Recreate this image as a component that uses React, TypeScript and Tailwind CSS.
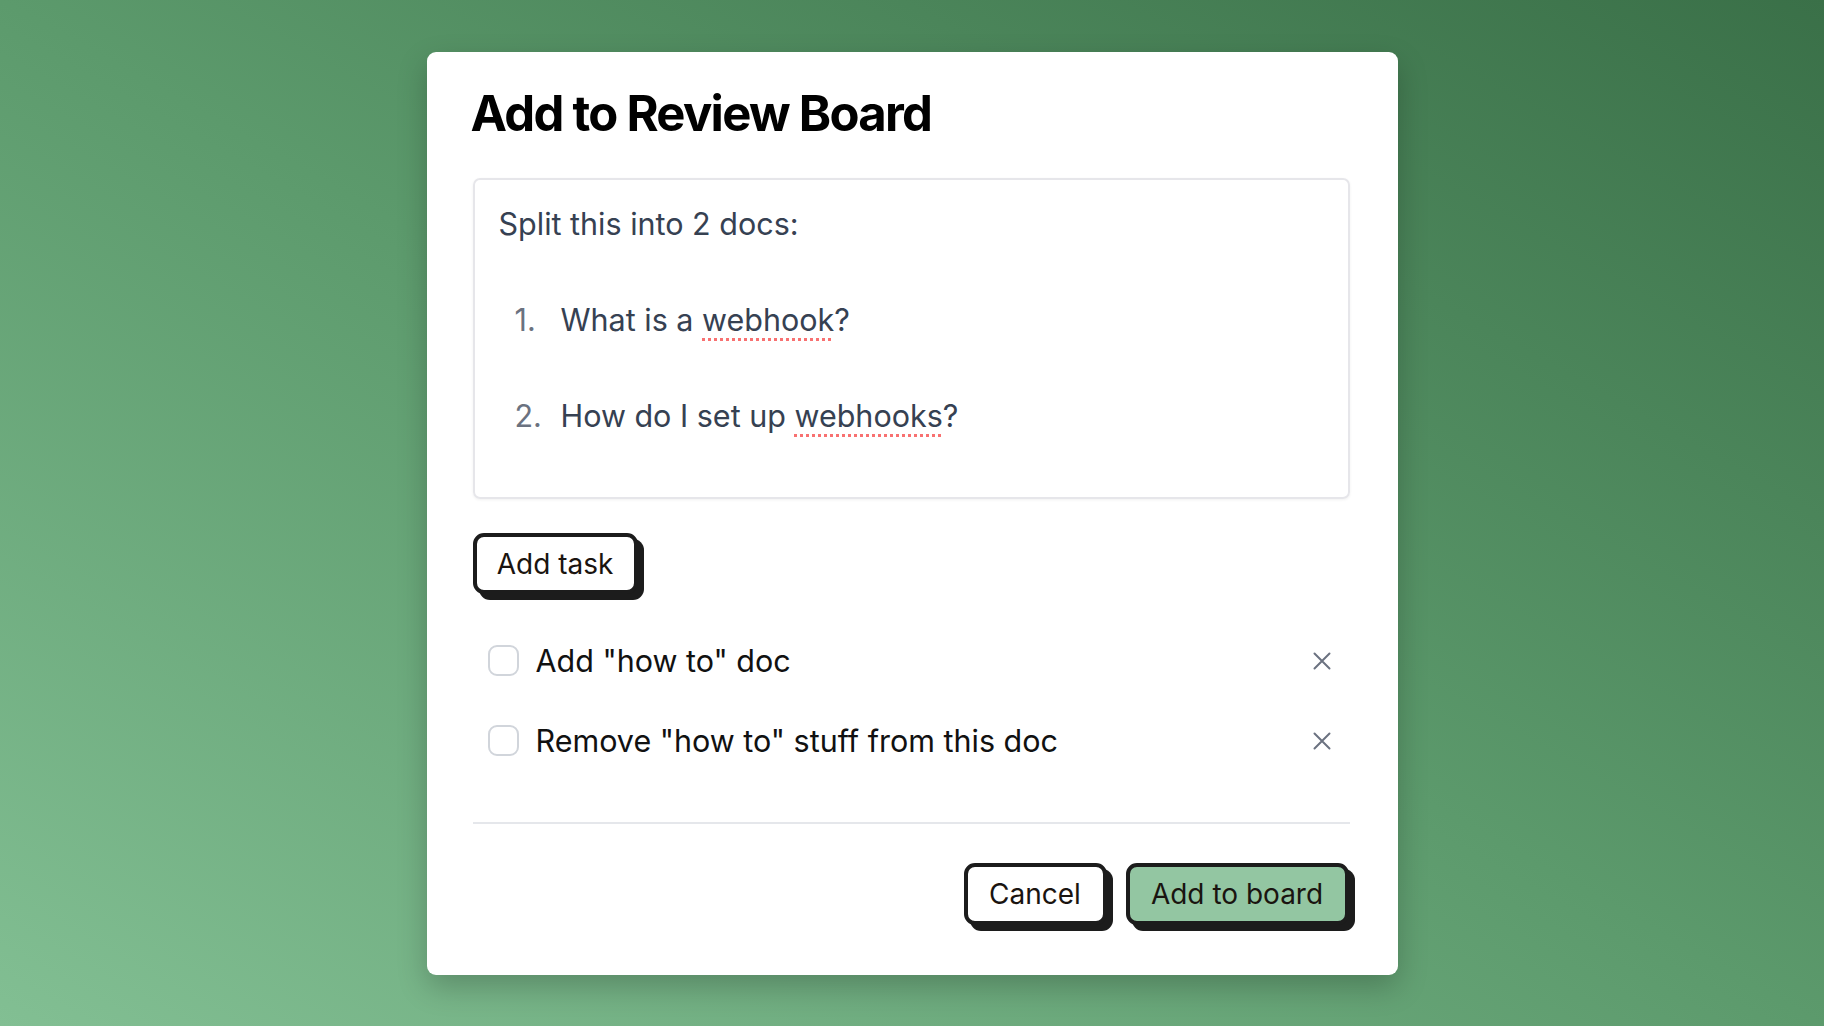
import React from 'react';

const tasks = ['Add "how to" doc', 'Remove "how to" stuff from this doc'];

const XIcon = () => (
  <svg width="18" height="18" viewBox="0 0 18 18" fill="none" stroke="#6b7280" strokeWidth="2" strokeLinecap="round">
    <path d="M1.5 1.5L16.5 16.5M16.5 1.5L1.5 16.5" />
  </svg>
);

const Misspelled: React.FC<{ children: React.ReactNode }> = ({ children }) => (
  <span className="underline decoration-dotted decoration-[#f87171] decoration-[3px] underline-offset-[7px]">
    {children}
  </span>
);

export default function App() {
  const [checked, setChecked] = React.useState<boolean[]>([false, false]);

  return (
    <div
      className="w-full h-[1026px] flex items-center justify-center bg-linear-to-tr from-[#82bf93] via-[#5c9a6c] to-[#3a7048]"
      style={{ fontFamily: 'Inter, "Noto Sans", sans-serif' }}
    >
      <div className="w-[971px] h-[923px] bg-white rounded-[9px] shadow-[0_12px_30px_rgba(0,0,0,0.22)] pl-[46px] pr-[48px] pt-[37px] pb-[50px] flex flex-col">
        <h1 className="text-[49px] leading-[50px] font-bold text-black tracking-[-0.035em] -ml-[2px]">Add to Review Board</h1>

        <div className="mt-[39px] border-2 border-[#e6e6ea] rounded-[7px] shadow-[0_1px_3px_rgba(0,0,0,0.06)] pt-[24px] pb-[61px] pl-[24px] text-[30.5px] leading-[40px] text-[#364152]">
          <p>Split this into 2 docs:</p>
          <ol className="mt-[56px] flex flex-col gap-[56px]">
            <li className="flex pl-[16px]">
              <span className="w-[46px] text-[#6b7280]">1.</span>
              <span>
                What is a <Misspelled>webhook</Misspelled>?
              </span>
            </li>
            <li className="flex pl-[16px]">
              <span className="w-[46px] text-[#6b7280]">2.</span>
              <span>
                How do I set up <Misspelled>webhooks</Misspelled>?
              </span>
            </li>
          </ol>
        </div>

        <div className="mt-[34px]">
          <button className="w-[165px] h-[61px] border-4 border-[#1c1c1c] rounded-[11px] bg-white shadow-[6px_6px_0_#1c1c1c] text-[28px] leading-none pt-[2px] text-[#1a1410]">
            Add task
          </button>
        </div>

        <div className="mt-[27px] flex flex-col">
          {tasks.map((t, i) => (
            <div key={t} className="h-[80px] flex items-center pl-[15px] pr-[19px]">
              <button
                onClick={() => setChecked(c => c.map((v, j) => (j === i ? !v : v)))}
                className={`w-[31px] h-[31px] rounded-[9px] border-2 ${checked[i] ? 'bg-[#93c6a2] border-[#1c1c1c]' : 'border-[#d1d5db] bg-white'}`}
              />
              <span className="ml-[17px] flex-1 text-[30.5px] text-[#111111]">{t}</span>
              <button className="w-[18px] h-[18px] flex items-center justify-center">
                <XIcon />
              </button>
            </div>
          ))}
        </div>

        <div className="mt-[41px] h-[2px] bg-[#e5e7eb]" />

        <div className="mt-[39px] flex justify-end gap-[19px] pr-[1px]">
          <button className="w-[143px] h-[62px] border-4 border-[#1c1c1c] rounded-[11px] bg-white shadow-[6px_6px_0_#1c1c1c] text-[28px] text-[#1a1410]">
            Cancel
          </button>
          <button className="w-[223px] h-[62px] border-4 border-[#1c1c1c] rounded-[11px] bg-[#93c6a2] shadow-[6px_6px_0_#1c1c1c] text-[28px] text-[#1a1410]">
            Add to board
          </button>
        </div>
      </div>
    </div>
  );
}
